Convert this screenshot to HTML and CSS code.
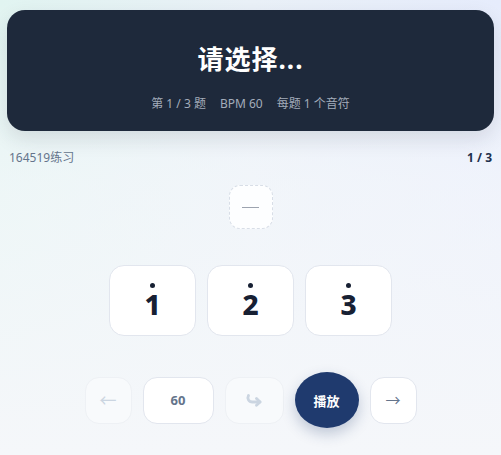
FILE: index.html
```html
<!DOCTYPE html>
<html lang="zh">
<head>
<meta charset="utf-8">
<link rel="stylesheet" href="styles.css">
</head>
<body>
<div class="page">
  <header class="hero">
    <h1 class="title">请选择...</h1>
    <div class="meta">
      <span>第 1 / 3 题</span>
      <span>BPM 60</span>
      <span>每题 1 个音符</span>
    </div>
  </header>
  <div class="info">
    <span class="name">164519练习</span>
    <span class="count">1 / 3</span>
  </div>
  <div class="answer-row">
    <div class="answer"><span class="dash"></span></div>
  </div>
  <div class="options">
    <button class="opt"><span class="dot"></span><span class="num">1</span></button>
    <button class="opt"><span class="dot"></span><span class="num">2</span></button>
    <button class="opt"><span class="dot"></span><span class="num">3</span></button>
  </div>
  <div class="controls">
    <button class="ctl ctl-sq disabled"><span class="arrow">←</span></button>
    <button class="ctl ctl-bpm">60</button>
    <button class="ctl ctl-redo disabled">
      <svg width="18" height="14" viewBox="0 0 18 14" fill="none" stroke="#cbd5e1" stroke-width="2.8" stroke-linecap="round" stroke-linejoin="round">
        <path d="M3.5 2.5 C2 5.5 3.5 9 7.5 9 L15 9"/>
        <path d="M11.5 5.5 L15 9 L11.5 12.3"/>
      </svg>
    </button>
    <button class="ctl ctl-play">播放</button>
    <button class="ctl ctl-sq"><span class="arrow dark">→</span></button>
  </div>
</div>
</body>
</html>
```
FILE: styles.css
```css
html, body {
  margin: 0;
  padding: 0;
  height: 100%;
}
body {
  font-family: "Noto Sans", "Noto Sans CJK SC", sans-serif;
  background:
    linear-gradient(180deg, rgba(246,248,251,0) 0%, rgba(246,248,251,0.6) 40%, #f5f7fa 100%),
    linear-gradient(90deg, #e1f4f1 0%, #eaf1f8 50%, #e6ecfc 100%);
  color: #1e293b;
}
.page {
  padding: 10px 7px 0;
  display: flex;
  flex-direction: column;
}
.hero {
  background: #1e293b;
  border-radius: 18px;
  height: 121px;
  box-sizing: border-box;
  display: flex;
  flex-direction: column;
  align-items: center;
  padding-top: 30px;
  box-shadow: 0 8px 20px rgba(30, 41, 59, 0.12);
}
.title {
  margin: 0;
  color: #ffffff;
  font-size: 26px;
  font-weight: 700;
  line-height: 38px;
  letter-spacing: 1px;
}
.meta {
  margin-top: 18px;
  display: flex;
  gap: 14px;
  font-size: 12px;
  line-height: 16px;
  color: #a3acba;
}
.info {
  display: flex;
  justify-content: space-between;
  align-items: center;
  padding: 0 2px;
  margin-top: 19px;
  font-size: 12px;
  line-height: 16px;
}
.name {
  color: #64748b;
}
.count {
  font-weight: 700;
  color: #1e2f4d;
}
.answer-row {
  display: flex;
  justify-content: center;
  margin-top: 19px;
}
.answer {
  width: 44px;
  height: 44px;
  box-sizing: border-box;
  border: 1px dashed #d8dee7;
  border-radius: 11px;
  background: #fdfeff;
  display: flex;
  align-items: center;
  justify-content: center;
}
.dash {
  width: 17px;
  height: 1px;
  background: #9ca3af;
}
.options {
  display: flex;
  justify-content: center;
  gap: 11px;
  margin-top: 36px;
}
.opt {
  width: 87px;
  height: 71px;
  box-sizing: border-box;
  border: 1px solid #e2e6ee;
  border-radius: 15px;
  background: #ffffff;
  display: flex;
  flex-direction: column;
  align-items: center;
  padding: 17px 0 0;
  font-family: inherit;
}
.dot {
  width: 5px;
  height: 5px;
  border-radius: 50%;
  background: #172033;
}
.num {
  margin-top: 1px;
  font-size: 28px;
  font-weight: 800;
  line-height: 30px;
  color: #172033;
}
.controls {
  display: flex;
  justify-content: center;
  align-items: center;
  gap: 11px;
  margin-top: 36px;
}
.ctl {
  height: 47px;
  box-sizing: border-box;
  border: 1px solid #e2e6ee;
  border-radius: 14px;
  background: #ffffff;
  display: flex;
  align-items: center;
  justify-content: center;
  font-family: inherit;
  padding: 0;
}
.ctl.disabled {
  background: #f8fafc;
  border-color: #eef1f5;
}
.ctl-sq {
  width: 47px;
}
.arrow {
  font-size: 17px;
  color: #cbd5e1;
  line-height: 1;
}
.arrow.dark {
  font-size: 15px;
  color: #64748b;
}
.ctl-bpm {
  width: 71px;
  font-size: 13px;
  font-weight: 700;
  color: #64748b;
}
.ctl-redo {
  width: 59px;
}
.ctl-play {
  width: 64px;
  height: 56px;
  border-radius: 50%;
  border: none;
  background: #1f3a6e;
  color: #ffffff;
  font-size: 13px;
  font-weight: 700;
  box-shadow: 0 6px 14px rgba(31, 58, 110, 0.25);
}
```
